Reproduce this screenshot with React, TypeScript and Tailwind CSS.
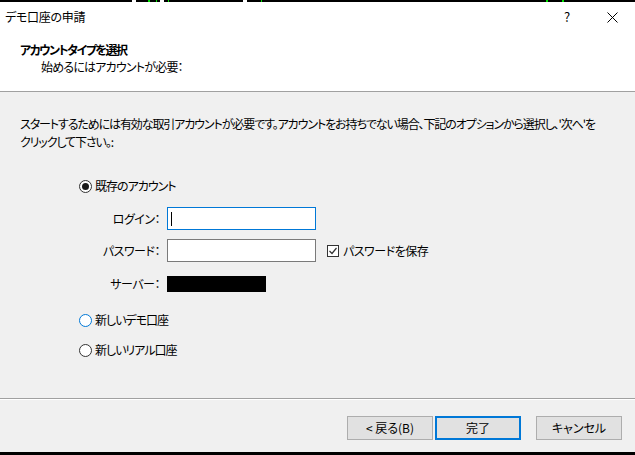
import React from 'react';

const Radio = ({ checked, focus, label }: { checked?: boolean; focus?: boolean; label: string }) => (
    <div className="flex items-center h-[18px] pl-[79px]">
        <span
            className={
                'w-[13px] h-[13px] rounded-full border bg-white flex items-center justify-center ' +
                (focus ? 'border-[#0078d7]' : 'border-[#333333]')
            }
        >
            {checked && <span className="w-[7px] h-[7px] rounded-full bg-[#1a1a1a]" />}
        </span>
        <span className="ml-[3px] tracking-[-1px]">{label}</span>
    </div>
);

const Btn = ({ label, primary }: { label: string; primary?: boolean }) => (
    <button
        className={
            'w-[86px] h-[24px] bg-[#e1e1e1] flex items-center justify-center text-[12px] ' +
            (primary ? 'border-2 border-[#0078d7]' : 'border border-[#adadad]')
        }
    >
        {label}
    </button>
);

export default function App() {
    return (
        <div className="w-[635px] h-[455px] flex flex-col text-[12px] text-black font-['Noto_Sans_CJK_JP',sans-serif] [font-feature-settings:'palt'] leading-[18px] overflow-hidden">
            {/* chart strip behind the dialog */}
            <div className="h-[2px] bg-black flex shrink-0">
                <div className="ml-[132px] w-[4px] bg-white" />
                <div className="ml-[12px] w-[2px] bg-[#00e000]" />
                <div className="ml-[6px] w-[1px] bg-[#00e000]" />
                <div className="ml-[3px] w-[4px] bg-white" />
                <div className="ml-[4px] w-[1px] bg-[#00e000]" />
                <div className="ml-[74px] w-[4px] bg-white" />
                <div className="ml-[14px] w-[1px] bg-[#00e000]" />
                <div className="ml-[284px] w-[2px] bg-[#00e000]" />
                <div className="ml-[14px] w-[2px] bg-[#00e000]" />
            </div>

            {/* header */}
            <div className="h-[89px] bg-white shrink-0 flex flex-col">
                <div className="h-[30px] flex items-center pl-[5px] pr-[17px]">
                    <span className="flex-1 tracking-[-0.3px]">デモ口座の申請</span>
                    <span className="w-[10px] text-center text-[13px]">?</span>
                    <svg className="ml-[35px]" width="11" height="11" viewBox="0 0 11 11">
                        <path d="M0.5 0.5 L10.5 10.5 M10.5 0.5 L0.5 10.5" stroke="#000" strokeWidth="1" />
                    </svg>
                </div>
                <div className="mt-[9px] pl-[20px] font-bold leading-[17px] tracking-[-1.5px]">アカウントタイプを選択</div>
                <div className="pl-[41px] leading-[17px] tracking-[-0.8px]">始めるにはアカウントが必要：</div>
            </div>
            <div className="h-px bg-[#a0a0a0] shrink-0" />

            {/* body */}
            <div className="flex-1 bg-[#f0f0f0] pt-[23px] flex flex-col">
                <div className="px-[20px] whitespace-nowrap tracking-[-1.1px]">
                    スタートするためには有効な取引アカウントが必要です。アカウントをお持ちでない場合、下記のオプションから選択し、'次へ'を
                    <br />
                    クリックして下さい。:
                </div>

                <div className="mt-[26px]">
                    <Radio checked label="既存のアカウント" />
                </div>

                <div className="mt-[12px] flex items-center">
                    <span className="w-[160px] text-right tracking-[-0.5px]">ログイン：</span>
                    <div className="ml-[7px] w-[149px] h-[23px] bg-white border border-[#0078d7] flex items-center pl-[3px]">
                        <div className="w-px h-[14px] bg-black" />
                    </div>
                </div>

                <div className="mt-[9px] flex items-center">
                    <span className="w-[160px] text-right tracking-[-0.5px]">パスワード：</span>
                    <div className="ml-[7px] w-[149px] h-[23px] bg-white border border-[#7a7a7a]" />
                    <span className="ml-[11px] w-[12px] h-[12px] border border-[#333333] bg-white flex items-center justify-center">
                        <svg width="10" height="10" viewBox="0 0 10 10">
                            <path d="M1.5 5 L4 7.5 L8.5 2" stroke="#333" strokeWidth="1.2" fill="none" />
                        </svg>
                    </span>
                    <span className="ml-[4px] tracking-[-0.5px]">パスワードを保存</span>
                </div>

                <div className="mt-[13px] flex items-center">
                    <span className="w-[160px] text-right tracking-[-0.5px]">サーバー：</span>
                    <div className="ml-[7px] w-[99px] h-[16px] bg-black" />
                </div>

                <div className="mt-[18px]">
                    <Radio focus label="新しいデモ口座" />
                </div>
                <div className="mt-[12px]">
                    <Radio label="新しいリアル口座" />
                </div>
            </div>

            <div className="h-px bg-[#a0a0a0] shrink-0" />
            <div className="h-px bg-white shrink-0" />

            {/* footer */}
            <div className="h-[52px] bg-[#f0f0f0] shrink-0 flex justify-end items-start pt-[16px] pr-[13px]">
                <Btn label="< 戻る(B)" />
                <div className="ml-[2px]">
                    <Btn primary label="完了" />
                </div>
                <div className="ml-[15px]">
                    <Btn label="キャンセル" />
                </div>
            </div>
            <div className="h-[3px] bg-black shrink-0" />
        </div>
    );
}
